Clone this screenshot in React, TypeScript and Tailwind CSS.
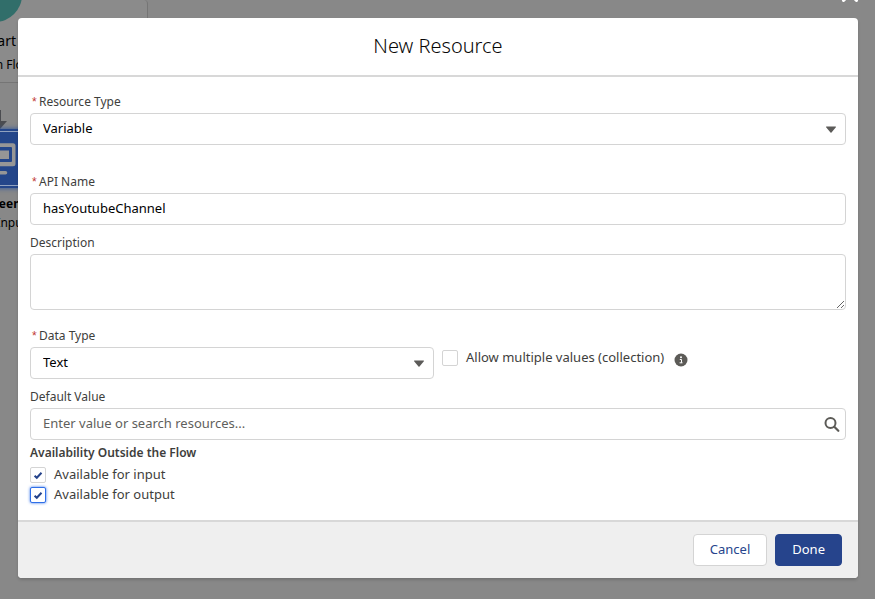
import { useState } from 'react';
import type { ReactNode } from 'react';

const resourceTypes = ['Variable', 'Constant', 'Formula', 'Text Template', 'Stage'];
const dataTypes = ['Text', 'Record', 'Number', 'Currency', 'Boolean', 'Date'];

const fieldClass =
  'block w-full h-8 px-3 rounded border border-[#d4d4d4] bg-white text-[13px] text-black placeholder:text-[#5f5f5d] outline-none';

function Label({ htmlFor, required, children }: { htmlFor: string; required?: boolean; children: ReactNode }) {
  return (
    <label htmlFor={htmlFor} className="flex mb-0.5 text-xs leading-[18px] text-[#3e3e3c]">
      {required && <span className="w-[9px] pl-0.5 font-['Liberation_Sans',sans-serif] text-[#c23934]">*</span>}
      {children}
    </label>
  );
}

function Select({ id, options }: { id: string; options: string[] }) {
  return (
    <div className="relative">
      <select id={id} className={`${fieldClass} appearance-none pr-8`}>
        {options.map((option) => (
          <option key={option}>{option}</option>
        ))}
      </select>
      <svg className="absolute right-[9px] top-[13px] pointer-events-none" width="12" height="8" viewBox="0 0 12 8">
        <path d="M1.500 .5h9a.5.5 0 0 1 .4.8L6.500 6.500a.7.7 0 0 1-1 0L1.100 1.300a.5.5 0 0 1 .4-.8z" fill="#5c5b59" />
      </svg>
    </div>
  );
}

interface CheckboxProps {
  id: string;
  label: string;
  checked: boolean;
  onChange: (checked: boolean) => void;
  highlighted?: boolean;
}

function Checkbox({ id, label, checked, onChange, highlighted }: CheckboxProps) {
  return (
    <div className="flex items-center gap-2 h-5">
      <span className="relative flex">
        <input
          id={id}
          type="checkbox"
          checked={checked}
          onChange={(e) => onChange(e.target.checked)}
          className={`w-4 h-4 appearance-none rounded-xs border bg-white outline-none ${highlighted ? 'border-[#2f6fe8] shadow-[0_0_3px_#2f6fe8]' : 'border-[#d4d4d4]'
            }`}
        />
        {checked && (
          <svg className="absolute inset-0 pointer-events-none" width="16" height="16" viewBox="0 0 16 16">
            <path d="M4.600 8.700 6.800 10.800 11.500 5.800" fill="none" stroke="#26448c" strokeWidth="2" />
          </svg>
        )}
      </span>
      <label htmlFor={id} className="pb-0.5 text-[13px] leading-[18px] text-[#3e3e3c]">{label}</label>
    </div>
  );
}

// Dimmed flow canvas behind the dialog
function FlowCanvas() {
  return (
    <div className="absolute inset-0 overflow-hidden bg-[#888888] text-black" aria-hidden="true">
      <div className="absolute left-0 top-0 w-[148px] h-[83px] rounded-tr border-r border-b border-[#757575] bg-[#8b8b8b]" />
      <div className="absolute -left-8 -top-8 w-[54px] h-[54px] rounded-full bg-[#316e6a]" />
      <p className="absolute right-full -mr-4 top-8 text-sm leading-[18px]">Start</p>
      <p className="absolute right-full -mr-8 top-14 text-xs leading-[18px] whitespace-nowrap">Screen Flow</p>
      <svg className="absolute left-0 top-[110px]" width="8" height="19" viewBox="0 0 8 19">
        <path d="M0 0h1v11h6L0 19z" fill="#4b4c50" />
      </svg>
      <div className="absolute -left-9 top-[129px] w-[60px] h-[59px] border-y-2 border-[#24468a] bg-[#24468a] shadow-[0_0_5px_#24509f] ring-1 ring-inset ring-[#91a2bf]" />
      <svg className="absolute left-0 top-[142px]" width="18" height="34" viewBox="0 0 18 34">
        <path d="M0 1.300h13a2.500 2.500 0 0 1 2.500 2.500v18a2.500 2.500 0 0 1-2.500 2.500H0z" fill="#969696" />
        <path d="M0 5h11a1 1 0 0 1 1 1v13a1 1 0 0 1-1 1H0z" fill="#24468a" />
        <path d="M0 8.500h9v8.500H0z" fill="#969696" />
        <path d="M0 29h5.500a1.800 1.800 0 0 1 0 3.600H0z" fill="#969696" />
      </svg>
      <p className="absolute right-full -mr-[21px] top-[195px] text-xs leading-[18px] font-bold">Screen</p>
      <p className="absolute right-full -mr-[27px] top-[214px] text-xs leading-[18px]">Input</p>
    </div>
  );
}

export default function App() {
  const [apiName, setApiName] = useState('hasYoutubeChannel');
  const [description, setDescription] = useState('');
  const [defaultValue, setDefaultValue] = useState('');
  const [isCollection, setIsCollection] = useState(false);
  const [isInput, setIsInput] = useState(true);
  const [isOutput, setIsOutput] = useState(true);

  return (
    <div className="relative min-h-screen pt-[18px] pl-[18px] pr-[17px] pb-[21px] overflow-hidden font-['Noto_Sans',sans-serif]">
      <FlowCanvas />

      <button type="button" aria-label="Close" className="absolute right-4 -top-[15px] text-white">
        <svg width="18" height="18" viewBox="0 0 18 18" fill="none" stroke="currentColor" strokeWidth="3" strokeLinecap="round">
          <path d="M2.500 2.500 15.500 15.500M15.500 2.500 2.500 15.500" />
        </svg>
      </button>

      <div role="dialog" aria-labelledby="dialog-title" className="relative rounded bg-white shadow-[0_2px_3px_rgba(0,0,0,0.16)]">
        {/* Header */}
        <header className="pt-3.5 pb-[15px] border-b-2 border-[#d8d8d8] text-center">
          <h2 id="dialog-title" className="text-xl leading-7 font-light text-[#080707]">New Resource</h2>
        </header>

        {/* Body */}
        <form id="resource-form" className="px-3 pt-4 pb-[15px]" onSubmit={(e) => e.preventDefault()}>
          <div className="mb-7">
            <Label htmlFor="resource-type" required>Resource Type</Label>
            <Select id="resource-type" options={resourceTypes} />
          </div>

          <div className="mb-[9px]">
            <Label htmlFor="api-name" required>API Name</Label>
            <input id="api-name" className={`${fieldClass} pb-0.5`} value={apiName} onChange={(e) => setApiName(e.target.value)} />
          </div>

          <div className="mb-[17px]">
            <Label htmlFor="description">Description</Label>
            <textarea
              id="description"
              className="block w-full h-14 px-3 py-2 rounded border border-[#d4d4d4] bg-white text-[13px] outline-none"
              value={description}
              onChange={(e) => setDescription(e.target.value)}
            />
          </div>

          <div className="grid grid-cols-2 gap-2 mb-[9px]">
            <div>
              <Label htmlFor="data-type" required>Data Type</Label>
              <Select id="data-type" options={dataTypes} />
            </div>
            <div className="flex items-center gap-2.5 pt-2.5">
              <Checkbox id="collection" label="Allow multiple values (collection)" checked={isCollection} onChange={setIsCollection} />
              <button type="button" aria-label="Help" className="pt-1">
                <svg width="14" height="14" viewBox="0 0 14 14">
                  <circle cx="7" cy="7" r="6.500" fill="#5c5b57" />
                  <circle cx="7" cy="4.300" r="1" fill="#fff" />
                  <path d="M5.800 6.500h1.700v3.200M5.600 9.800h2.900" fill="none" stroke="#fff" strokeWidth="1" />
                </svg>
              </button>
            </div>
          </div>

          <div className="mb-1">
            <Label htmlFor="default-value">Default Value</Label>
            <div className="relative">
              <input
                id="default-value"
                className={`${fieldClass} pr-8 pb-0.5`}
                placeholder="Enter value or search resources..."
                value={defaultValue}
                onChange={(e) => setDefaultValue(e.target.value)}
              />
              <svg className="absolute right-1.5 top-2 pointer-events-none" width="16" height="16" viewBox="0 0 16 16" fill="none" stroke="#5c5b57" strokeLinecap="round">
                <circle cx="6.500" cy="7" r="5" strokeWidth="2" />
                <path d="M10.300 10.800 14.300 14.800" strokeWidth="2.200" />
              </svg>
            </div>
          </div>

          <fieldset>
            <legend className="mb-[3px] text-xs leading-[18px] font-semibold text-[#3e3e3c]">Availability Outside the Flow</legend>
            <Checkbox id="available-input" label="Available for input" checked={isInput} onChange={setIsInput} />
            <Checkbox id="available-output" label="Available for output" checked={isOutput} onChange={setIsOutput} highlighted />
          </fieldset>
        </form>

        {/* Footer */}
        <footer className="flex justify-end gap-2 py-3 px-4 rounded-b border-t-2 border-[#d8d8d8] bg-[#efefef] text-[13px]">
          <button type="button" className="h-8 px-4 rounded border border-[#d4d4d4] bg-white text-[#26448c]">Cancel</button>
          <button type="submit" form="resource-form" className="h-8 px-4 rounded border border-[#26448c] bg-[#26448c] text-white">Done</button>
        </footer>
      </div>
    </div>
  );
}
